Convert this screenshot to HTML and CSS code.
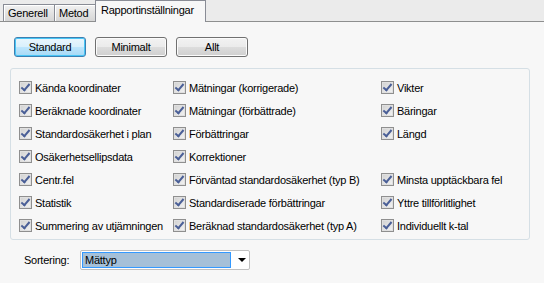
FILE: index.html
```html
<!DOCTYPE html>
<html>
<head lang="sv">
    <meta charset="UTF-8">
    <title>Rapportinställningar</title>
    <link rel="stylesheet" href="styles.css">
</head>
<body>
    <div id="tabs">
        <span class="tab t1">Generell</span>
        <span class="tab t2">Metod</span>
        <span class="tab t3 active">Rapportinställningar</span>
    </div>
    <div id="page">
        <div id="presets">
            <span class="btn default">Standard</span>
            <span class="btn">Minimalt</span>
            <span class="btn">Allt</span>
        </div>
        <div id="group">
            <label class="item"><i class="cb"></i>Kända koordinater</label>
            <label class="item"><i class="cb"></i>Mätningar (korrigerade)</label>
            <label class="item"><i class="cb"></i>Vikter</label>

            <label class="item"><i class="cb"></i>Beräknade koordinater</label>
            <label class="item"><i class="cb"></i>Mätningar (förbättrade)</label>
            <label class="item"><i class="cb"></i>Bäringar</label>

            <label class="item"><i class="cb"></i>Standardosäkerhet i plan</label>
            <label class="item"><i class="cb"></i>Förbättringar</label>
            <label class="item"><i class="cb"></i>Längd</label>

            <label class="item"><i class="cb"></i>Osäkerhetsellipsdata</label>
            <label class="item"><i class="cb"></i>Korrektioner</label>
            <span></span>

            <label class="item"><i class="cb"></i>Centr.fel</label>
            <label class="item"><i class="cb"></i>Förväntad standardosäkerhet (typ B)</label>
            <label class="item"><i class="cb"></i>Minsta upptäckbara fel</label>

            <label class="item"><i class="cb"></i>Statistik</label>
            <label class="item"><i class="cb"></i>Standardiserade förbättringar</label>
            <label class="item"><i class="cb"></i>Yttre tillförlitlighet</label>

            <label class="item"><i class="cb"></i>Summering av utjämningen</label>
            <label class="item"><i class="cb"></i>Beräknad standardosäkerhet (typ A)</label>
            <label class="item"><i class="cb"></i>Individuellt k-tal</label>
        </div>
        <div id="sort">
            <span class="lbl">Sortering:</span>
            <span class="combo">
                <span class="value">Mättyp</span>
                <span class="arrow"></span>
            </span>
        </div>
    </div>
</body>
</html>
```
FILE: styles.css
```css
*{
    margin: 0;
    padding: 0;
    box-sizing: border-box;
}
body{
    width: 544px;
    height: 283px;
    background: #f7f7f7;
    font-family: "Liberation Sans", Arial, sans-serif;
    font-size: 11px;
    letter-spacing: -0.25px;
    color: #000;
    overflow: hidden;
}
#tabs{
    display: flex;
    align-items: flex-end;
    height: 22px;
    padding-left: 3px;
    background: #ebebeb;
    border-bottom: 1px solid #8e8f8f;
}
#tabs .tab{
    height: 17px;
    padding-left: 4px;
    line-height: 16px;
    white-space: nowrap;
    border: 1px solid #898c95;
    border-bottom: 0;
    background: linear-gradient(#f2f2f2, #e3e3e3 50%, #d6d6d6);
    box-shadow: inset 1px 1px 0 #fff;
}
#tabs .tab + .tab{
    margin-left: -1px;
}
#tabs .t1{
    width: 52px;
}
#tabs .t2{
    width: 42px;
}
#tabs .t3{
    width: 111px;
}
#tabs .tab.active{
    height: 22px;
    margin-bottom: -1px;
    padding-left: 5px;
    line-height: 19px;
    background: #f7f7f7;
    box-shadow: none;
}
#page{
    padding-top: 15px;
}
#presets{
    display: flex;
    gap: 9px;
    padding-left: 14px;
}
.btn{
    width: 72px;
    height: 20px;
    line-height: 18px;
    text-align: center;
    border: 1px solid #707070;
    border-radius: 3px;
    background: linear-gradient(#f2f2f2, #ebebeb 50%, #dddddd 50%, #cfcfcf);
    box-shadow: inset 0 0 0 1px #fbfbfb;
}
.btn.default{
    border-color: #3c7fb1;
    background: linear-gradient(#eaf6fd, #d9f0fc 50%, #bee6fd 50%, #a7d9f5);
    box-shadow: inset 0 0 0 1px #48c6f6;
}
#group{
    display: grid;
    grid-template-columns: 154px 208px auto;
    grid-auto-rows: 23px;
    width: 520px;
    height: 172px;
    margin: 11px 0 0 10px;
    padding: 7px 0 0 8px;
    border: 1px solid #d5dfe5;
    border-radius: 3px;
}
.item{
    display: flex;
    align-items: center;
    gap: 3px;
    white-space: nowrap;
}
.cb{
    position: relative;
    width: 13px;
    height: 13px;
    flex: none;
    border: 1px solid #8f8f8f;
    background: linear-gradient(135deg, #d0d0d0, #f4f4f4);
    box-shadow: inset 0 0 0 1px #e0e0e0;
}
.cb::after{
    content: "";
    position: absolute;
    left: 3px;
    top: 0;
    width: 3px;
    height: 7px;
    border: solid #4a5f97;
    border-width: 0 2px 2px 0;
    transform: rotate(40deg);
}
#sort{
    display: flex;
    align-items: center;
    margin-top: 10px;
    padding-left: 24px;
}
.lbl{
    width: 56px;
}
.combo{
    display: flex;
    align-items: center;
    width: 170px;
    height: 20px;
    padding: 1px;
    border: 1px solid #c0c0c0;
    border-radius: 2px;
    background: #fff;
}
.combo .value{
    width: 149px;
    height: 16px;
    padding-left: 2px;
    line-height: 14px;
    border: 1px solid #3399ff;
    background: #a5c0d8;
}
.combo .arrow{
    margin-left: 7px;
    width: 0;
    height: 0;
    border-left: 4px solid transparent;
    border-right: 4px solid transparent;
    border-top: 4px solid #000;
}
```
